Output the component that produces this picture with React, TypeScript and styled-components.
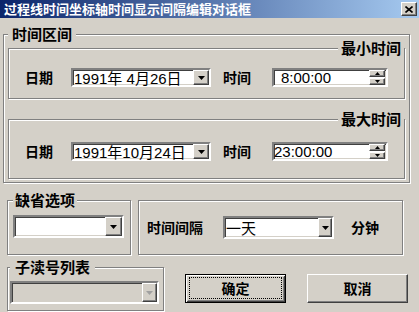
import React from 'react';
import styled, { createGlobalStyle, css } from 'styled-components';

const GlobalStyle = createGlobalStyle`
  html, body {
    margin: 0;
    padding: 0;
    background: #d4d0c8;
  }
  body {
    font-family: "Liberation Sans", "Noto Sans CJK SC", sans-serif;
    color: #000;
  }
`;

const raised = css`
  background: #d4d0c8;
  border: 1px solid;
  border-color: #fff #404040 #404040 #fff;
  box-shadow: inset -1px -1px 0 #808080, inset 1px 1px 0 #d4d0c8;
`;

const sunken = css`
  border: 2px solid;
  border-color: #808080 #fff #fff #808080;
  box-shadow: inset 1px 1px 0 #404040, inset -1px -1px 0 #d4d0c8;
`;

const etched = css`
  border: 1px solid #808080;
  box-shadow: 1px 1px 0 #fff, inset 1px 1px 0 #fff;
`;

const Dialog = styled.div`
  width: 419px;
  height: 312px;
  background: #d4d0c8;
  display: flex;
  flex-direction: column;
  align-items: flex-start;
  overflow: hidden;
`;

const TitleBar = styled.div`
  align-self: stretch;
  box-sizing: border-box;
  height: 18px;
  display: flex;
  align-items: center;
  justify-content: space-between;
  padding: 0 2px 0 4px;
  background: linear-gradient(90deg, #0a246a 0%, #a6caf0 100%);
`;

const TitleText = styled.span`
  color: #fff;
  font: bold 13px "Noto Sans CJK SC", sans-serif;
  line-height: 18px;
  white-space: nowrap;
`;

const CloseButton = styled.div`
  box-sizing: border-box;
  width: 16px;
  height: 14px;
  ${raised};
  display: flex;
  align-items: center;
  justify-content: center;
`;

const Group = styled.fieldset<{ $w: number; $pad: string; $top?: number; $left?: number }>`
  box-sizing: border-box;
  width: ${p => p.$w}px;
  min-width: 0;
  margin: ${p => p.$top ?? 0}px 0 0 ${p => p.$left ?? 0}px;
  padding: ${p => p.$pad};
  ${etched};
`;

const Legend = styled.legend<{ $right?: boolean; $inset?: number }>`
  font: bold 15px "Noto Sans CJK SC", sans-serif;
  line-height: 14px;
  padding: 0 ${p => p.$inset ?? 3}px;
  background: #d4d0c8;
  white-space: nowrap;
  ${p => p.$right && css`
    margin-left: auto;
    margin-right: 0;
  `}
`;

const FieldRow = styled.div`
  display: flex;
  align-items: center;
  height: 19px;
  padding-left: 16px;
`;

const Label = styled.span<{ $gap?: number }>`
  font: bold 14px "Noto Sans CJK SC", sans-serif;
  line-height: 19px;
  margin-left: ${p => p.$gap ?? 0}px;
  white-space: nowrap;
`;

const Combo = styled.div<{ $w: number; $h: number; $gap?: number; $disabled?: boolean }>`
  box-sizing: border-box;
  width: ${p => p.$w}px;
  height: ${p => p.$h}px;
  margin-left: ${p => p.$gap ?? 0}px;
  display: flex;
  align-items: stretch;
  background: ${p => (p.$disabled ? '#d4d0c8' : '#fff')};
  ${sunken};
`;

const ComboText = styled.span`
  flex: 1;
  display: flex;
  align-items: center;
  padding-left: 1px;
  font-size: 15px;
  white-space: pre;
`;

const DropButton = styled.div<{ $w?: number }>`
  box-sizing: border-box;
  width: ${p => p.$w ?? 16}px;
  ${raised};
  display: flex;
  align-items: center;
  justify-content: center;
`;

const TimeValue = styled.span`
  width: 57px;
  text-align: right;
  font-size: 15px;
  line-height: 15px;
  align-self: center;
  white-space: pre;
`;

const Spin = styled.div`
  margin: 0 1px 0 auto;
  width: 16px;
  display: flex;
  flex-direction: column;
  justify-content: center;
  gap: 1px;
`;

const SpinButton = styled.div`
  box-sizing: border-box;
  height: 7px;
  ${raised};
  display: flex;
  align-items: center;
  justify-content: center;
`;

const BottomRow = styled.div<{ $top: number; $align: string }>`
  display: flex;
  align-items: ${p => p.$align};
  margin-top: ${p => p.$top}px;
  padding-left: 7px;
`;

const IntervalBox = styled.div`
  box-sizing: border-box;
  width: 265px;
  height: 55px;
  margin-left: 7px;
  display: flex;
  align-items: center;
  padding: 0 0 0 8px;
  ${etched};
`;

const PushButton = styled.div<{ $gap: number; $default?: boolean }>`
  box-sizing: border-box;
  width: 101px;
  height: 29px;
  margin: 14px 0 0 ${p => p.$gap}px;
  display: flex;
  padding: 2px 3px 3px 3px;
  background: #d4d0c8;
  ${p =>
    p.$default
      ? css`
          border: 1px solid #000;
          box-shadow: inset 1px 1px 0 #fff, inset -1px -1px 0 #404040,
            inset 2px 2px 0 #d4d0c8, inset -2px -2px 0 #808080;
        `
      : raised};
`;

const Caption = styled.span<{ $focus?: boolean }>`
  flex: 1;
  display: flex;
  align-items: center;
  justify-content: center;
  font: bold 14px "Noto Sans CJK SC", sans-serif;
  border: 1px dotted ${p => (p.$focus ? '#000' : 'transparent')};
`;

const Arrow = ({ color = '#000' }: { color?: string }) => (
  <svg width="7" height="4" viewBox="0 0 7 4">
    <polygon points="0,0 7,0 3.5,4" fill={color} />
  </svg>
);

const SmallArrow = ({ up }: { up?: boolean }) => (
  <svg width="5" height="3" viewBox="0 0 5 3">
    <polygon points={up ? '2.5,0 5,3 0,3' : '0,0 5,0 2.5,3'} fill="#000" />
  </svg>
);

const CloseIcon = () => (
  <svg width="8" height="7" viewBox="0 0 8 7">
    <path d="M0.5 0.5 L7.5 6.5 M7.5 0.5 L0.5 6.5" stroke="#000" strokeWidth="1.6" />
  </svg>
);

interface RangeProps {
  title: string;
  date: string;
  time: string;
  top: number;
  pad: string;
}

const RangeGroup: React.FC<RangeProps> = ({ title, date, time, top, pad }) => (
  <Group $w={397} $pad={pad} $top={top}>
    <Legend $right>{title}</Legend>
    <FieldRow>
      <Label>日期</Label>
      <Combo $w={140} $h={19} $gap={18}>
        <ComboText>{date}</ComboText>
        <DropButton>
          <Arrow />
        </DropButton>
      </Combo>
      <Label $gap={12}>时间</Label>
      <Combo $w={116} $h={19} $gap={21}>
        <TimeValue>{time}</TimeValue>
        <Spin>
          <SpinButton>
            <SmallArrow up />
          </SpinButton>
          <SpinButton>
            <SmallArrow />
          </SpinButton>
        </Spin>
      </Combo>
    </FieldRow>
  </Group>
);

export default function App() {
  return (
    <>
      <GlobalStyle />
      <Dialog>
        <TitleBar>
          <TitleText>过程线时间坐标轴时间显示间隔编辑对话框</TitleText>
          <CloseButton>
            <CloseIcon />
          </CloseButton>
        </TitleBar>

        <Group $w={407} $pad="0 4px 3px 4px" $top={9} $left={3}>
          <Legend $inset={4}>时间区间</Legend>
          <RangeGroup title="最小时间" date="1991年 4月26日" time="8:00:00" top={0} pad="13px 0 11px 0" />
          <RangeGroup title="最大时间" date="1991年10月24日" time="23:00:00" top={13} pad="16px 0 17px 0" />
        </Group>

        <BottomRow $top={10} $align="flex-end">
          <Group $w={124} $pad="8px 6px 16px 5px">
            <Legend $inset={2}>缺省选项</Legend>
            <Combo $w={111} $h={23}>
              <ComboText />
              <DropButton $w={17}>
                <Arrow />
              </DropButton>
            </Combo>
          </Group>
          <IntervalBox>
            <Label>时间间隔</Label>
            <Combo $w={111} $h={23} $gap={20}>
              <ComboText>一天</ComboText>
              <DropButton $w={14}>
                <Arrow />
              </DropButton>
            </Combo>
            <Label $gap={17}>分钟</Label>
          </IntervalBox>
        </BottomRow>

        <BottomRow $top={5} $align="flex-start">
          <Group $w={157} $pad="7px 4px 6px 2px">
            <Legend $inset={5}>子渎号列表</Legend>
            <Combo $w={149} $h={23} $disabled>
              <ComboText />
              <DropButton $w={15}>
                <Arrow color="#a0a0a0" />
              </DropButton>
            </Combo>
          </Group>
          <PushButton $gap={21} $default>
            <Caption $focus>确定</Caption>
          </PushButton>
          <PushButton $gap={21}>
            <Caption>取消</Caption>
          </PushButton>
        </BottomRow>
      </Dialog>
    </>
  );
}
